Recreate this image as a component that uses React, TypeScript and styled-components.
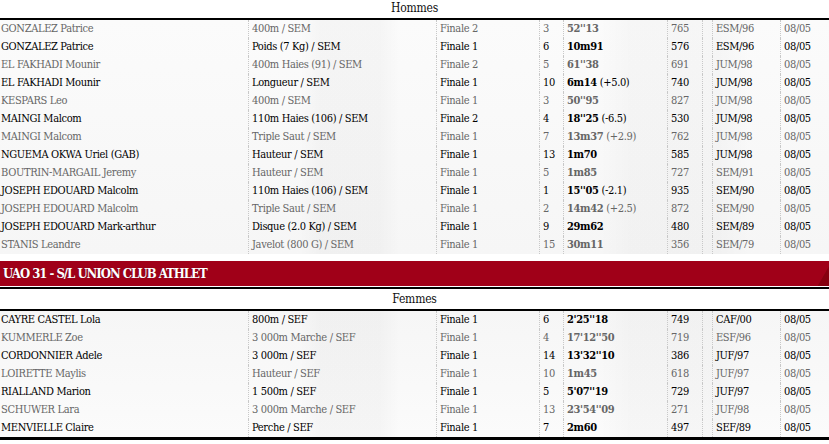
import styled, { createGlobalStyle } from "styled-components";

type Result = {
  name: string;
  event: string;
  round: string;
  rank: string;
  perf: string;
  wind?: string;
  points: string;
  cat: string;
  date: string;
};

const men: Result[] = [
  { name: "GONZALEZ Patrice", event: "400m / SEM", round: "Finale 2", rank: "3", perf: "52''13", points: "765", cat: "ESM/96", date: "08/05" },
  { name: "GONZALEZ Patrice", event: "Poids (7 Kg) / SEM", round: "Finale 1", rank: "6", perf: "10m91", points: "576", cat: "ESM/96", date: "08/05" },
  { name: "EL FAKHADI Mounir", event: "400m Haies (91) / SEM", round: "Finale 2", rank: "5", perf: "61''38", points: "691", cat: "JUM/98", date: "08/05" },
  { name: "EL FAKHADI Mounir", event: "Longueur / SEM", round: "Finale 1", rank: "10", perf: "6m14", wind: "(+5.0)", points: "740", cat: "JUM/98", date: "08/05" },
  { name: "KESPARS Leo", event: "400m / SEM", round: "Finale 1", rank: "3", perf: "50''95", points: "827", cat: "JUM/98", date: "08/05" },
  { name: "MAINGI Malcom", event: "110m Haies (106) / SEM", round: "Finale 2", rank: "4", perf: "18''25", wind: "(-6.5)", points: "530", cat: "JUM/98", date: "08/05" },
  { name: "MAINGI Malcom", event: "Triple Saut / SEM", round: "Finale 1", rank: "7", perf: "13m37", wind: "(+2.9)", points: "762", cat: "JUM/98", date: "08/05" },
  { name: "NGUEMA OKWA Uriel (GAB)", event: "Hauteur / SEM", round: "Finale 1", rank: "13", perf: "1m70", points: "585", cat: "JUM/98", date: "08/05" },
  { name: "BOUTRIN-MARGAIL Jeremy", event: "Hauteur / SEM", round: "Finale 1", rank: "5", perf: "1m85", points: "727", cat: "SEM/91", date: "08/05" },
  { name: "JOSEPH EDOUARD Malcolm", event: "110m Haies (106) / SEM", round: "Finale 1", rank: "1", perf: "15''05", wind: "(-2.1)", points: "935", cat: "SEM/90", date: "08/05" },
  { name: "JOSEPH EDOUARD Malcolm", event: "Triple Saut / SEM", round: "Finale 1", rank: "2", perf: "14m42", wind: "(+2.5)", points: "872", cat: "SEM/90", date: "08/05" },
  { name: "JOSEPH EDOUARD Mark-arthur", event: "Disque (2.0 Kg) / SEM", round: "Finale 1", rank: "9", perf: "29m62", points: "480", cat: "SEM/89", date: "08/05" },
  { name: "STANIS Leandre", event: "Javelot (800 G) / SEM", round: "Finale 1", rank: "15", perf: "30m11", points: "356", cat: "SEM/79", date: "08/05" },
];

const women: Result[] = [
  { name: "CAYRE CASTEL Lola", event: "800m / SEF", round: "Finale 1", rank: "6", perf: "2'25''18", points: "749", cat: "CAF/00", date: "08/05" },
  { name: "KUMMERLE Zoe", event: "3 000m Marche / SEF", round: "Finale 1", rank: "4", perf: "17'12''50", points: "719", cat: "ESF/96", date: "08/05" },
  { name: "CORDONNIER Adele", event: "3 000m / SEF", round: "Finale 1", rank: "14", perf: "13'32''10", points: "386", cat: "JUF/97", date: "08/05" },
  { name: "LOIRETTE Maylis", event: "Hauteur / SEF", round: "Finale 1", rank: "10", perf: "1m45", points: "618", cat: "JUF/97", date: "08/05" },
  { name: "RIALLAND Marion", event: "1 500m / SEF", round: "Finale 1", rank: "5", perf: "5'07''19", points: "729", cat: "JUF/97", date: "08/05" },
  { name: "SCHUWER Lara", event: "3 000m Marche / SEF", round: "Finale 1", rank: "13", perf: "23'54''09", points: "271", cat: "JUF/98", date: "08/05" },
  { name: "MENVIELLE Claire", event: "Perche / SEF", round: "Finale 1", rank: "7", perf: "2m60", points: "497", cat: "SEF/89", date: "08/05" },
];

function ResultRows({ rows, mutedFirst }: { rows: Result[]; mutedFirst: boolean }) {
  return (
    <>
      {rows.map((r, i) => (
        <Row key={i} $muted={(i % 2 === 0) === mutedFirst}>
          <Cell>{r.name}</Cell>
          <Cell>{r.event}</Cell>
          <Cell>{r.round}</Cell>
          <Cell>{r.rank}</Cell>
          <Cell>
            <Perf>{r.perf}</Perf>
            {r.wind && <Wind>{r.wind}</Wind>}
          </Cell>
          <Cell>{r.points}</Cell>
          <Cell />
          <Cell>{r.cat}</Cell>
          <Cell>{r.date}</Cell>
        </Row>
      ))}
    </>
  );
}

export default function App() {
  return (
    <Page>
      <GlobalStyle />
      <Section>
        <SectionTitle>Hommes</SectionTitle>
        <Rows>
          <ResultRows rows={men} mutedFirst={true} />
        </Rows>
      </Section>
      <ClubBanner>UAO 31 - S/L UNION CLUB ATHLET</ClubBanner>
      <Section $closed>
        <SectionTitle>Femmes</SectionTitle>
        <Rows $alt>
          <ResultRows rows={women} mutedFirst={false} />
        </Rows>
      </Section>
    </Page>
  );
}

const GlobalStyle = createGlobalStyle`
  body {
    margin: 0;
    background: #fff;
    font-family: "DejaVu Serif Condensed", "DejaVu Serif", serif;
    overflow: hidden;
  }
`;

const Page = styled.div`
  width: 829px;
  margin-top: -4px;
`;

const Section = styled.section<{ $closed?: boolean }>`
  border-bottom: ${(p) => (p.$closed ? "3px solid #000" : "none")};
`;

const SectionTitle = styled.div`
  height: 20px;
  line-height: 20px;
  text-align: center;
  font-size: 12px;
  letter-spacing: -0.2px;
  color: #111;
  background: #fff;
  border-top: 2px solid #000;
  border-bottom: 2px solid #000;
`;

const Rows = styled.div<{ $alt?: boolean }>`
  background:
    linear-gradient(90deg, transparent 300px, rgba(0, 0, 0, 0.025) 320px, rgba(0, 0, 0, 0.025) 380px, transparent 400px),
    linear-gradient(90deg, transparent 600px, rgba(0, 0, 0, 0.02) 630px, rgba(0, 0, 0, 0.02) 720px, transparent 750px),
    linear-gradient(${(p) => (p.$alt ? "180deg" : "0deg")}, #f6f6f6, #fbfbfb);
`;

const Row = styled.div<{ $muted: boolean }>`
  display: grid;
  grid-template-columns: 248px 188px 103px 24px 104px 35px 10px 68px 1fr;
  height: 18px;
  line-height: 18px;
  font-size: 11px;
  letter-spacing: -0.35px;
  color: ${(p) => (p.$muted ? "#666" : "#000")};
  white-space: nowrap;
`;

const Cell = styled.div`
  padding-left: 3px;
  overflow: hidden;

  &:first-child {
    padding-left: 1px;
  }

  & + & {
    border-left: 1px dotted #c8c8c8;
  }
`;

const Perf = styled.b`
  font-weight: 700;
`;

const Wind = styled.span`
  margin-left: 3px;
`;

const ClubBanner = styled.div`
  margin: 7px 0 1px;
  height: 25px;
  line-height: 25px;
  padding-left: 3px;
  color: #fff;
  font-size: 13px;
  font-weight: 700;
  letter-spacing: -1px;
  text-shadow: 0 0 1px rgba(0, 0, 0, 0.4);
  background: linear-gradient(120deg, #a00018 0%, #a00018 98.6%, #86000f 98.7%, #86000f 100%);
`;
